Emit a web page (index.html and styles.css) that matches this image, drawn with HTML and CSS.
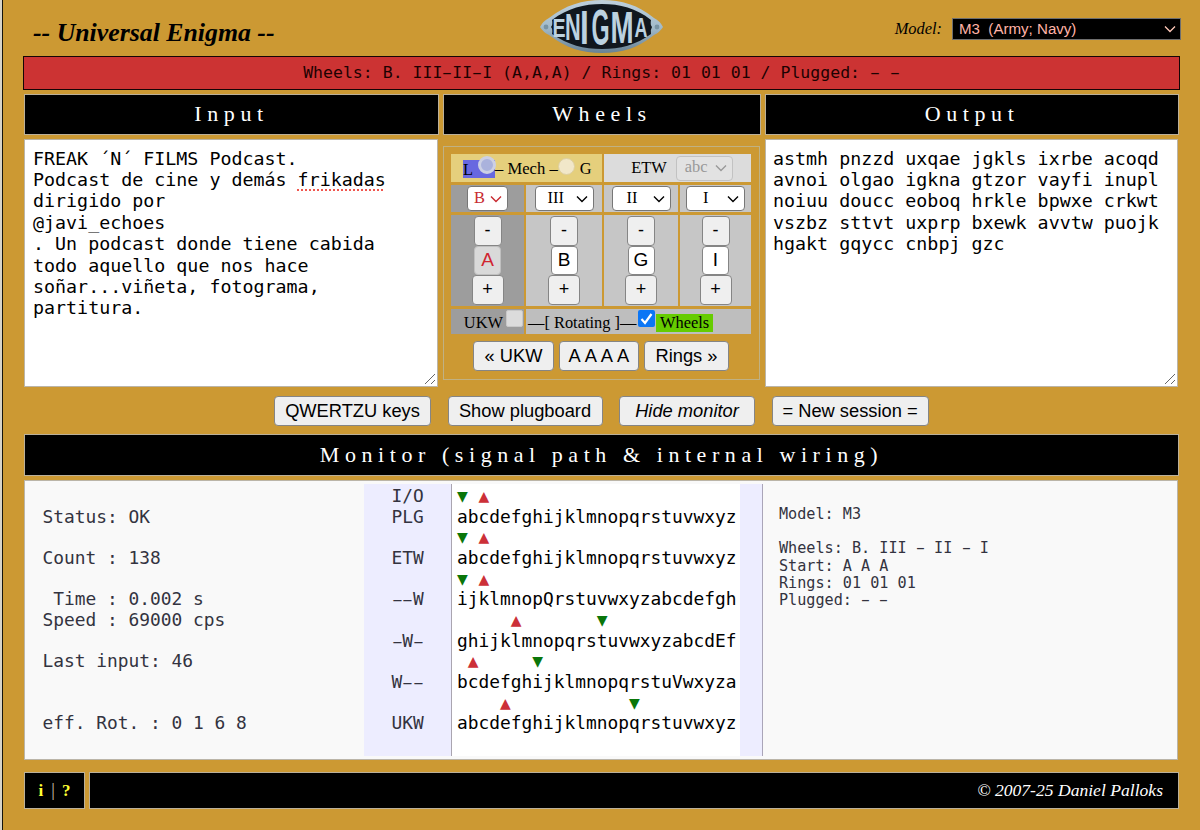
FILE: index.html
```html
<!DOCTYPE html>
<html lang="en">
<head>
<meta charset="utf-8">
<title>Universal Enigma</title>
<link rel="stylesheet" href="styles.css">
</head>
<body>
<div class="page">
  <header class="top">
    <h1 class="title">-- Universal Enigma --</h1>
    <svg class="logo" width="124" height="54" viewBox="0 0 124 54" role="img" aria-label="Enigma">
      <defs>
        <linearGradient id="steel" x1="0" y1="0" x2="0" y2="1">
          <stop offset="0" stop-color="#bfd0dc"/><stop offset=".5" stop-color="#a3bccb"/><stop offset="1" stop-color="#688294"/>
        </linearGradient>
      </defs>
      <path d="M0 27Q3 21 9 18C26 5 42 0 62 0C82 0 98 5 114 18Q120 21 123 27Q120 32 114 35C98 48 82 53 62 53C42 53 26 48 9 35Q3 32 0 27Z" fill="url(#steel)"/>
      <path d="M11 27Q13 25 12 20C28 8 44 4 62 4C80 4 96 8 111 20Q110 25 112 27Q110 30 111 34C96 45 80 49 62 49C44 49 28 45 12 34Q13 29 11 27Z" fill="#10171e"/>
      <circle cx="6" cy="27" r="2.4" fill="#7894a4"/><circle cx="117" cy="27" r="2.4" fill="#7894a4"/>
      <g class="logo-letters">
        <text transform="translate(12.5 36.5) scale(1.3 1.75)">E</text>
        <text transform="translate(25 40) scale(1.45 2.45)">N</text>
        <text transform="translate(40 44) scale(2.1 3.2)">I</text>
        <text transform="translate(51.5 44.5) scale(1.55 3.3)">G</text>
        <text transform="translate(70.5 42.5) scale(1.85 2.9)">M</text>
        <text transform="translate(94.5 37) scale(1.2 1.9)">A</text>
      </g>
    </svg>
    <div class="model">
      <span class="model-label">Model:</span>
      <div class="model-select"><span>M3&nbsp; (Army; Navy)</span>
        <svg width="12" height="8" viewBox="0 0 12 8"><path d="M1 1.5L6 6.5L11 1.5"/></svg></div>
    </div>
  </header>

  <div class="keybar">Wheels: B. III<i class="dash">-</i>II<i class="dash">-</i>I (A,A,A) / Rings: 01 01 01 / Plugged: <i class="dash">-</i> <i class="dash">-</i></div>

  <div class="columns heads">
    <h2 class="head">Input</h2><h2 class="head">Wheels</h2><h2 class="head">Output</h2>
  </div>

  <div class="columns work">
    <div class="area">FREAK ´N´ FILMS Podcast.
Podcast de cine y demás <span class="misspelt">frikadas</span>
dirigido por
@javi_echoes
. Un podcast donde tiene cabida
todo aquello que nos hace
soñar...viñeta, fotograma,
partitura.<svg class="grip" width="12" height="12" viewBox="0 0 12 12"><path d="M1 11L11 1M7 11L11 7"/></svg></div>

    <div class="machine">
      <div class="wheel-grid">
        <div class="cell mech"><span class="lever">L <i class="radio on"></i></span><span>– Mech –</span><i class="radio"></i><span class="g">G</span></div>
        <div class="cell etw"><span>ETW</span><span class="pick disabled">abc <svg width="12" height="8" viewBox="0 0 12 8"><path d="M1 1.5L6 6.5L11 1.5"/></svg></span></div>

        <div class="cell dark"><span class="pick narrow red">B <svg width="12" height="8" viewBox="0 0 12 8"><path d="M1 1.5L6 6.5L11 1.5"/></svg></span></div>
        <div class="cell"><span class="pick">III <svg width="12" height="8" viewBox="0 0 12 8"><path d="M1 1.5L6 6.5L11 1.5"/></svg></span></div>
        <div class="cell"><span class="pick two">II <svg width="12" height="8" viewBox="0 0 12 8"><path d="M1 1.5L6 6.5L11 1.5"/></svg></span></div>
        <div class="cell"><span class="pick one">I <svg width="12" height="8" viewBox="0 0 12 8"><path d="M1 1.5L6 6.5L11 1.5"/></svg></span></div>

        <div class="cell dark stack"><b class="key">-</b><b class="key letter off">A</b><b class="key plus">+</b></div>
        <div class="cell stack"><b class="key">-</b><b class="key letter">B</b><b class="key plus">+</b></div>
        <div class="cell stack"><b class="key">-</b><b class="key letter">G</b><b class="key plus">+</b></div>
        <div class="cell stack"><b class="key">-</b><b class="key letter">I</b><b class="key plus">+</b></div>

        <div class="cell dark ukw"><span>UKW</span><i class="box"></i></div>
        <div class="cell rotating"><span class="rot-text">—[ Rotating ]—</span><i class="box checked"><svg width="17" height="17" viewBox="0 0 17 17"><path d="M3.5 9L7 13L13.5 4"/></svg></i><span class="tag">Wheels</span></div>
      </div>
      <div class="machine-buttons">
        <button class="btn ukw-btn">« UKW</button><button class="btn reset-btn">A A A A</button><button class="btn rings-btn">Rings »</button>
      </div>
    </div>

    <div class="area">astmh pnzzd uxqae jgkls ixrbe acoqd
avnoi olgao igkna gtzor vayfi inupl
noiuu doucc eoboq hrkle bpwxe crkwt
vszbz sttvt uxprp bxewk avvtw puojk
hgakt gqycc cnbpj gzc<svg class="grip" width="12" height="12" viewBox="0 0 12 12"><path d="M1 11L11 1M7 11L11 7"/></svg></div>
  </div>

  <div class="actions">
    <button class="btn b1">QWERTZU keys</button>
    <button class="btn b2">Show plugboard</button>
    <button class="btn b3">Hide monitor</button>
    <button class="btn b4">= New session =</button>
  </div>

  <h2 class="head monitor-head">Monitor (signal path &amp; internal wiring)</h2>

  <div class="monitor">
    <pre class="status">

Status: OK

Count : 138

 Time : 0.002 s
Speed : 69000 cps

Last input: 46


eff. Rot. : 0 1 6 8</pre>
    <pre class="labels">I/O
PLG

ETW

<i class="dash">-</i><i class="dash">-</i>W

<i class="dash">-</i>W<i class="dash">-</i>

W<i class="dash">-</i><i class="dash">-</i>

UKW</pre>
    <pre class="wiring"><i class="down">▼</i> <i class="up">▲</i>
abcdefghijklmnopqrstuvwxyz
<i class="down">▼</i> <i class="up">▲</i>
abcdefghijklmnopqrstuvwxyz
<i class="down">▼</i> <i class="up">▲</i>
ijklmnopQrstuvwxyzabcdefgh
     <i class="up">▲</i>       <i class="down">▼</i>
ghijklmnopqrstuvwxyzabcdEf
 <i class="up">▲</i>     <i class="down">▼</i>
bcdefghijklmnopqrstuVwxyza
    <i class="up">▲</i>           <i class="down">▼</i>
abcdefghijklmnopqrstuvwxyz</pre>
    <div class="gutter"></div>
    <pre class="summary">Model: M3

Wheels: B. III <i class="dash">-</i> II <i class="dash">-</i> I
Start: A A A
Rings: 01 01 01
Plugged: <i class="dash">-</i> <i class="dash">-</i></pre>
  </div>

  <footer class="foot">
    <div class="help"><span>i</span><em>|</em><span>?</span></div>
    <div class="copy">© 2007-25 Daniel Palloks</div>
  </footer>
</div>
</body>
</html>
```
FILE: styles.css
```css
* { box-sizing: border-box; }
body { margin: 0; background: #cc9933; color: #000; font-family: "Liberation Serif", serif; overflow: hidden; }
i { font-style: normal; }
h1, h2, pre { margin: 0; }
.page { margin-left: 0; height: 830px; padding: 0 20px 0 21px; border-left: 2px solid #d9d4c8; box-shadow: inset 1px 0 #16130a; }

.top { height: 56px; position: relative; display: flex; justify-content: space-between; }
.title { font: italic bold 25.8px/30px "Liberation Serif", serif; padding: 18px 0 0 10px; }
.logo { position: absolute; left: 517px; top: 0; }
.logo-letters { font: bold 15px "Liberation Sans", sans-serif; fill: #bcd2e0; }
.model { display: flex; align-items: flex-start; padding-top: 18px; margin-right: -1px; }
.model-label { font: italic 16.4px/21px "Liberation Serif", serif; margin-right: 10px; }
.model-select { width: 229px; height: 22px; border: 1px solid #6e6e6e; background: #000; color: #ffb3a7; display: flex; justify-content: space-between; align-items: center; padding: 0 4px 0 6px; font: 15.1px/20px "Liberation Sans", sans-serif; white-space: nowrap; }
.model-select path { fill: none; stroke: #ffc8b8; stroke-width: 1.3; }

.keybar { height: 34px; border: 1px solid #150505; background: #cc3333; font: 16.52px/32px "DejaVu Sans Mono", monospace; text-align: center; margin-bottom: 4px; white-space: pre; color: #1c0202; }
.dash { display: inline-block; transform: scaleX(1.8); }

.columns { display: grid; grid-template-columns: 415px 318px 414px; column-gap: 4px; margin-left: 1px; }
.head { height: 41px; border: 1px solid #bbb09a; background: #000; color: #fff; font: normal 22px/38px "Liberation Serif", serif; letter-spacing: 5.6px; text-align: center; white-space: nowrap; }
.work { margin-top: 4px; height: 248px; align-items: start; }
.area { position: relative; height: 248px; margin-right: 1px; border: 1px solid #bbb5a8; background: #fff; padding: 7.5px 0 0 8px; font: 18.32px/21.4px "DejaVu Sans Mono", monospace; white-space: pre; }
.area:last-child { padding-left: 7px; }
.misspelt { text-decoration: underline dotted #f0564e 1.5px; text-underline-offset: 4px; text-decoration-skip-ink: none; }
.grip { position: absolute; right: 1px; bottom: 1px; }
.grip path { stroke: #666; stroke-width: 1; fill: none; }

.machine { margin-top: 7px; height: 234px; width: 317px; border: 1px solid #c0b183; padding: 7px 7px 0; }
.wheel-grid { display: grid; grid-template-columns: 73px 76px 74px 71px; grid-template-rows: 28px 27px 91px 25px; gap: 3px 2px; }
.cell { background: #c6c6c6; display: flex; align-items: center; justify-content: center; font-size: 16.4px; line-height: 20px; white-space: nowrap; }
.dark { background: #9d9d9d; }
.mech { grid-column: span 2; background: #e5cf7c; justify-content: flex-start; padding: 2px 0 0 12px; }
.lever { background: #6868e0; width: 32px; height: 18px; line-height: 19px; display: flex; gap: 5px; }
.radio { flex: none; width: 17px; height: 17px; border-radius: 50%; background: #f1e7c9; border: 1px solid #ddcfa0; margin-top: -6px; }
.radio.on { background: #aab2dc; border: 3px solid #ccd0e4; margin-top: -4px; width: 18px; height: 18px; }
.mech .g { margin-left: 5px; }
.mech span:nth-child(2) { font-size: 16.6px; }
.etw { grid-column: span 2; background: #dcdcdc; gap: 9px; padding-left: 9px; }
.pick { width: 59px; height: 25px; border: 1px solid #777; border-radius: 4px; background: #fff; display: flex; justify-content: space-between; align-items: center; padding: 0 5px 2px 12px; }
.pick svg { margin-top: 2px; }
.pick path { fill: none; stroke: currentColor; stroke-width: 1.4; }
.pick.two { padding-left: 14px; }
.pick.one { padding-left: 16px; }
.pick.narrow { width: 41px; padding-left: 6px; }
.pick.red { color: #c82a30; }
.pick.disabled { color: #999; border-color: #c2c2c2; background: #e2e2e2; width: 57px; padding-left: 8px; }
.stack { flex-direction: column; }
.key { width: 28px; height: 30px; border: 1px solid #858585; border-radius: 4px; background: #efefef; font: 18px/27px "Liberation Sans", sans-serif; text-align: center; }
.key.letter { background: #fff; width: 27px; height: 29px; font-size: 19px; line-height: 26px; }
.key.plus { width: 32px; }
.key.off { background: #d9d9d9; color: #d0252f; border-color: #c0c0c0; }
.ukw { justify-content: flex-end; padding: 2px 1px 0 0; gap: 3px; }
.box { flex: none; width: 17px; height: 17px; border-radius: 2px; background: #dcdcdc; border: 1px solid #c9c9c9; margin-top: -8px; }
.box.checked { background: #0b76f5; border: 0; display: flex; }
.box.checked path { stroke: #fff; stroke-width: 2.2; fill: none; }
.rotating { grid-column: span 3; background: #bebebe; justify-content: flex-start; padding: 2px 0 0 2px; }
.rot-text { width: 110px; font-size: 16.4px; }
.tag { background: #66cc00; padding: 0 4px; margin-left: 1px; height: 18px; line-height: 18px; }

.btn { display: block; padding: 0; border: 1px solid #858585; border-radius: 4px; background: #efefef; color: #000; font: 18.3px/26px "Liberation Sans", sans-serif; height: 30px; white-space: nowrap; }
.machine-buttons { display: flex; gap: 5px; padding: 7px 0 0 22px; }
.ukw-btn { width: 81px; }
.reset-btn { width: 80px; word-spacing: -1.7px; letter-spacing: .3px; font-kerning: none; }
.rings-btn { width: 85px; }

.actions { display: flex; gap: 16.5px; height: 47px; padding: 9px 0 0 251px; }
.b1 { width: 157px; } .b2 { width: 155px; } .b3 { width: 136px; font-style: italic; } .b4 { width: 157px; }
.monitor-head { height: 42px; line-height: 40px; margin: 0 1px; letter-spacing: 5.56px; }

.monitor { margin: 4px 2px 0 1px; height: 280px; border: 1px solid #bbb5a8; background: #f9f9f9; display: grid; grid-template-columns: 339px 87px 289px 23px 1fr; padding: 3px 0; }
.monitor pre { font: 17.86px/20.65px "DejaVu Sans Mono", monospace; padding-top: 2px; }
.monitor .status { padding-left: 17.5px; color: #333340; }
.monitor .labels { padding-left: 27.5px; background: #ededff; color: #333340; }
.monitor .wiring { padding-left: 5px; background: #fff; border-left: 1px solid #aaa5b0; }
.down { color: #0a760a; }
.up { color: #cc3038; }
.gutter { background: #ededff; border-right: 1px solid #aaa5b8; }
.monitor .summary { font-size: 15.17px; line-height: 17.2px; padding: 22px 0 0 16px; color: #333340; }

.foot { display: flex; gap: 4px; margin: 12px 1px 0; }
.help, .copy { height: 37px; border: 1px solid #bbb09a; background: #000; line-height: 35px; }
.help { width: 61px; display: flex; justify-content: center; gap: 8px; font-size: 18px; color: #ff3; }
.help span { font-weight: bold; font-size: 17px; }
.help span:last-child { margin-left: -1px; }
.help em { font-style: normal; color: #c8c0b0; }
.copy { flex: 1; color: #fff; font-style: italic; font-size: 17.6px; text-align: right; padding-right: 15px; }
```
